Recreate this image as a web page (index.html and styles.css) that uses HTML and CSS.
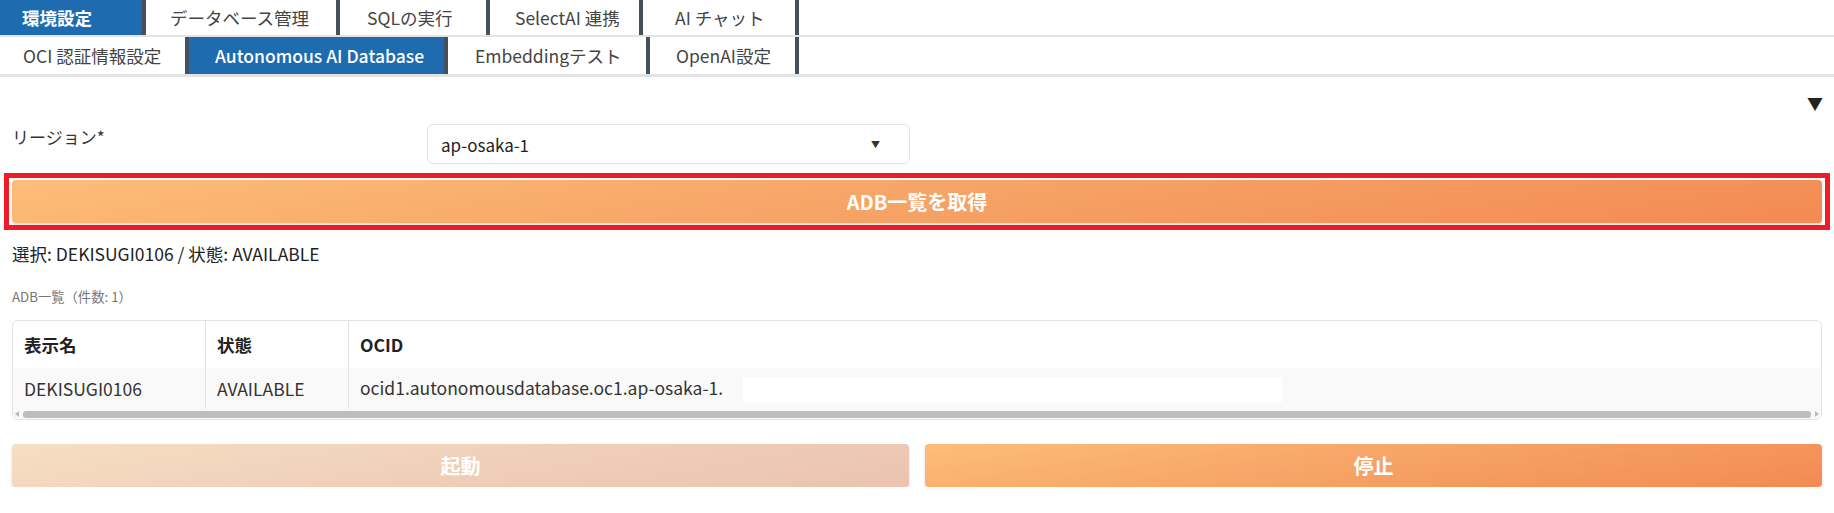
FILE: index.html
```html
<!DOCTYPE html>
<html>
  <head>
    <meta charset="utf-8">
    <title>ADB</title>
    <link rel="stylesheet" href="styles.css">
  </head>
  <body>
    <div class="tabs top">
      <div class="tab active">環境設定</div>
      <div class="tab">データベース管理</div>
      <div class="tab">SQLの実行</div>
      <div class="tab">SelectAI 連携</div>
      <div class="tab">AI チャット</div>
    </div>
    <div class="tabs sub">
      <div class="tab">OCI 認証情報設定</div>
      <div class="tab active">Autonomous AI Database</div>
      <div class="tab">Embeddingテスト</div>
      <div class="tab">OpenAI設定</div>
    </div>

    <div class="panel">
      <div class="collapse">▼</div>

      <div class="field">
        <label class="label">リージョン*</label>
        <div class="select">
          <span>ap-osaka-1</span>
          <span class="caret">▼</span>
        </div>
      </div>

      <div class="highlight">
        <button class="btn">ADB一覧を取得</button>
      </div>

      <p class="status">選択: DEKISUGI0106 / 状態: AVAILABLE</p>
      <p class="caption">ADB一覧（件数: 1）</p>

      <div class="grid">
        <table>
          <tr>
            <th class="c1">表示名</th>
            <th class="c2">状態</th>
            <th>OCID</th>
          </tr>
          <tr class="row">
            <td>DEKISUGI0106</td>
            <td>AVAILABLE</td>
            <td>ocid1.autonomousdatabase.oc1.ap-osaka-1.<span class="mask"></span></td>
          </tr>
        </table>
        <div class="scroll">
          <span class="arrow left"></span>
          <span class="thumb"></span>
          <span class="arrow right"></span>
        </div>
      </div>

      <div class="actions">
        <button class="btn off">起動</button>
        <button class="btn">停止</button>
      </div>
    </div>
  </body>
</html>
```

FILE: styles.css
```css
body {
  margin: 0;
  background: #fff;
  color: #222;
  font-family: "Noto Sans CJK JP", "Noto Sans", sans-serif;
}

/* tab bars */
.tabs {
  display: flex;
  border-bottom: 2px solid #e3e3e3;
}

.tabs.sub {
  border-bottom-width: 3px;
}

.tab {
  display: flex;
  align-items: center;
  box-sizing: border-box;
  height: 35px;
  padding-left: 24px;
  font-size: 17.5px;
  color: #444;
  border-right: 4px solid #45505c;
  white-space: nowrap;
}

.top .tab:nth-child(1) { width: 146px; padding-left: 22px; }
.top .tab:nth-child(2) { width: 194px; }
.top .tab:nth-child(3) { width: 150px; padding-left: 27px; }
.top .tab:nth-child(4) { width: 153px; padding-left: 25px; }
.top .tab:nth-child(5) { width: 156px; padding-left: 32px; }

.sub .tab {
  height: 37px;
}

.sub .tab:nth-child(1) { width: 189px; padding-left: 23px; }
.sub .tab:nth-child(2) { width: 259px; padding-left: 26px; }
.sub .tab:nth-child(3) { width: 202px; padding-left: 27px; }
.sub .tab:nth-child(4) { width: 149px; padding-left: 26px; }

.tab.active {
  background: #1e6bb0;
  color: #fff;
  font-weight: 500;
}

.top .tab.active {
  font-weight: bold;
}

/* panel */
.panel {
  position: relative;
  padding: 18px 12px 0 12px;
}

.collapse {
  position: absolute;
  right: 11px;
  top: 14px;
  font-size: 16px;
  color: #222;
}

.field {
  display: flex;
  align-items: flex-start;
  padding-top: 29px;
}

.label {
  width: 415px;
  font-size: 17px;
  color: #333;
}

.select {
  display: flex;
  justify-content: space-between;
  align-items: center;
  width: 483px;
  height: 40px;
  box-sizing: border-box;
  padding: 0 13px;
  border: 1px solid #e3e3e3;
  border-radius: 6px;
  font-size: 17px;
  color: #222;
}

.caret {
  font-size: 9px;
  color: #333;
  margin-right: 16px;
}

.highlight {
  margin: 9px -8px 0 -8px;
  border: 5px solid #ee1c25;
  padding: 2px 3px;
}

.btn {
  display: block;
  width: 100%;
  height: 43px;
  border: none;
  border-radius: 4px;
  font-family: "Noto Sans CJK JP", sans-serif;
  font-size: 20px;
  font-weight: bold;
  color: #fff;
  background: linear-gradient(170deg, #fdbd78 0%, #f6a366 50%, #f38a52 100%);
  box-shadow: 0 2px 3px rgba(0,0,0,0.15);
}

.btn.off {
  background: linear-gradient(170deg, #f6dfc3 0%, #f0cfb9 50%, #ebc3ae 100%);
}

.status {
  margin: 11px 0 0 0;
  font-size: 17.5px;
  color: #222;
}

.caption {
  margin: 21px 0 0 0;
  font-size: 13.3px;
  color: #777;
}

/* table */
.grid {
  margin-top: 14px;
  border: 1px solid #e3e3e3;
  border-radius: 6px;
  overflow: hidden;
}

table {
  width: 100%;
  border-collapse: collapse;
}

th, td {
  text-align: left;
  padding: 0 11px;
  font-size: 17.5px;
  border-right: 1px solid #e3e3e3;
  white-space: nowrap;
}

th:last-child, td:last-child {
  border-right: none;
}

th {
  height: 47px;
  font-weight: bold;
  color: #222;
}

td {
  height: 41px;
  color: #333;
}

.row {
  background: #f9f9f9;
}

.c1 {
  width: 170px;
}

.c2 {
  width: 120px;
}

.mask {
  display: inline-block;
  width: 539px;
  height: 25px;
  margin-left: 20px;
  background: #fff;
  vertical-align: middle;
}

.scroll {
  display: flex;
  align-items: center;
  height: 10px;
  padding: 0 2px;
  background: #f9f9f9;
}

.thumb {
  flex: 1;
  height: 7px;
  border-radius: 3px;
  background: #bdbdbd;
  margin: 0 4px;
}

.arrow {
  width: 0;
  height: 0;
  border-top: 3px solid transparent;
  border-bottom: 3px solid transparent;
}

.arrow.left {
  border-right: 4px solid #bbb;
}

.arrow.right {
  border-left: 4px solid #bbb;
}

.actions {
  display: grid;
  grid-template-columns: 1fr 1fr;
  gap: 16px;
  margin-top: 24px;
}
```
